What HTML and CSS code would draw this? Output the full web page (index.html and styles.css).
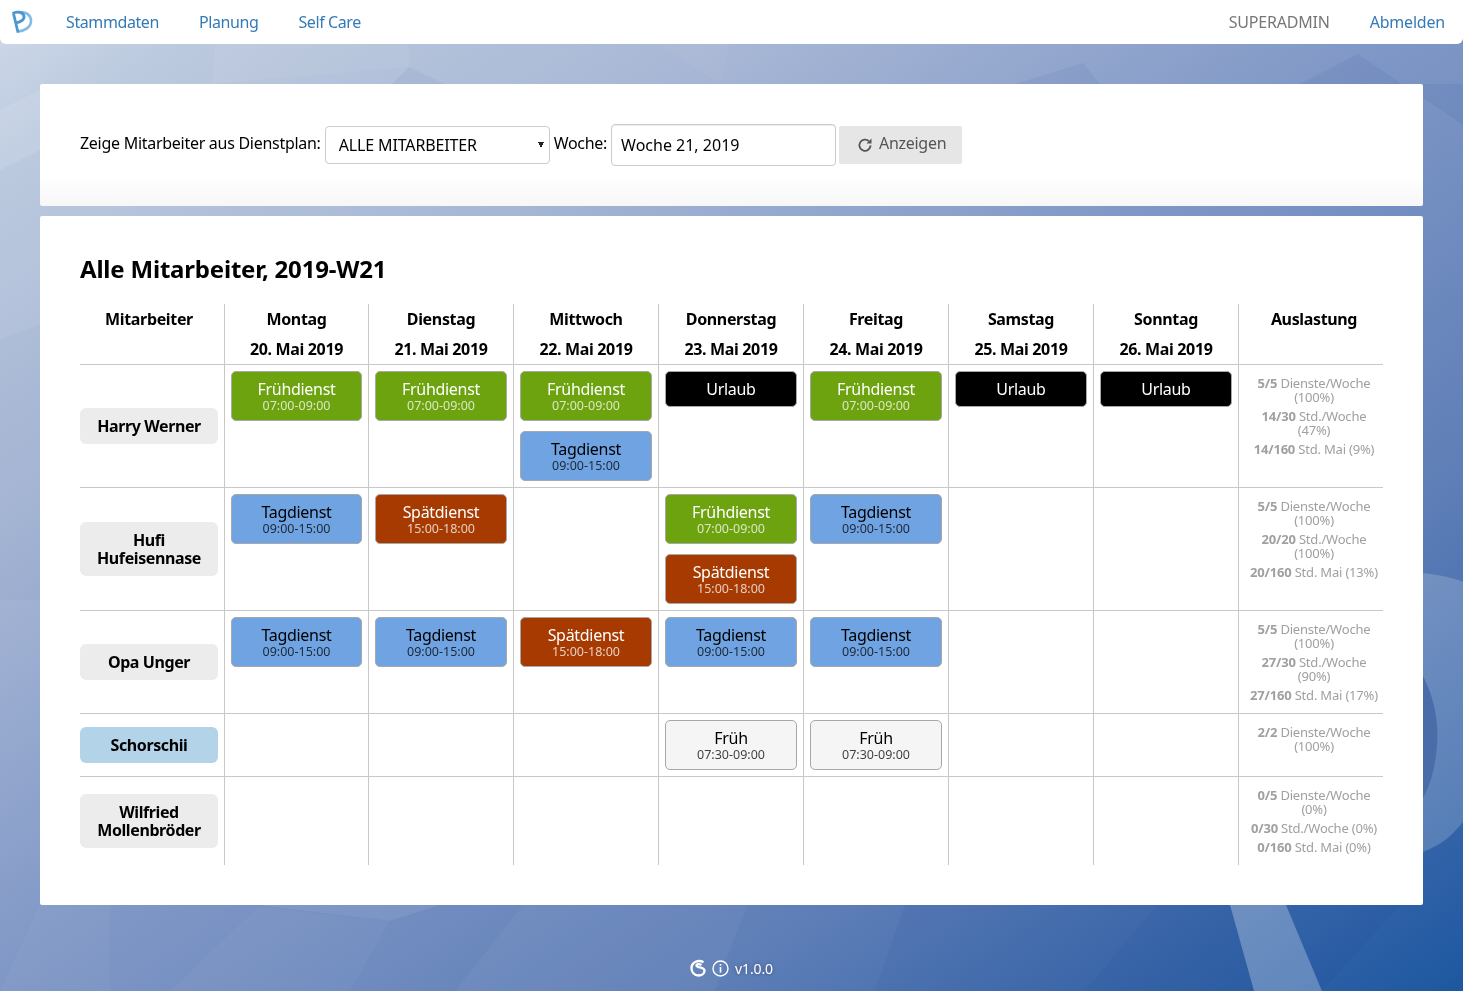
FILE: index.html
```html
<!DOCTYPE html>
<html lang="de">
<head>
    <meta charset="UTF-8">
    <meta name="viewport" content="width=device-width, initial-scale=1.0">
    <title>Dienstplan</title>
    <link rel="stylesheet" href="styles.css">
</head>
<body>

<!-- Page background -->
<svg class="backdrop" viewBox="0 0 1463 991" preserveAspectRatio="none" aria-hidden="true">
    <defs>
        <linearGradient id="bg" x1="0" y1="0" x2="1" y2="1">
            <stop offset="0" stop-color="#d0dbea"/>
            <stop offset="0.08" stop-color="#bccadf"/>
            <stop offset="0.27" stop-color="#a8b7d5"/>
            <stop offset="0.5" stop-color="#7f97c6"/>
            <stop offset="0.74" stop-color="#5e7eb7"/>
            <stop offset="0.95" stop-color="#2a5ea5"/>
            <stop offset="1" stop-color="#1c589f"/>
        </linearGradient>
    </defs>
    <rect width="1463" height="991" fill="url(#bg)"/>
    <g fill="#fff">
        <polygon points="215,44 409,44 409,67 212,84" opacity="0.05"/>
        <polygon points="660,44 730,44 720,84" opacity="0.04"/>
        <polygon points="0,170 40,150 40,90 0,110" opacity="0.1"/>
        <polygon points="258,907 390,921 350,991 170,991" opacity="0.03"/>
        <polygon points="258,905 440,905 390,921" opacity="0.07"/>
        <polygon points="523,905 747,905 715,991 455,991" opacity="0.04"/>
        <polygon points="1230,905 1286,905 1322,991 1254,991" opacity="0.26"/>
        <polygon points="40,905 110,905 110,991 0,991" opacity="0.03"/>
        <path d="M1423 573 C1440 575 1455 578 1463 582 L1463 822 C1450 838 1440 845 1423 852 Z" opacity="0.18"/>
    </g>
    <g fill="#103a80">
        <polygon points="409,67 445,84 392,84" opacity="0.05"/>
        <polygon points="1083,63 1100,84 1015,84" opacity="0.06"/>
        <polygon points="1358,54 1463,125 1463,84 1300,84" opacity="0.07"/>
        <polygon points="905,905 1157,905 1085,991 875,991" opacity="0.06"/>
        <polygon points="1157,905 1230,905 1254,991 1085,991" opacity="0.12"/>
        <polygon points="1286,905 1400,905 1322,991" opacity="0.06"/>
        <polygon points="0,340 40,325 40,600 0,600" opacity="0.03"/>
    </g>
    <path d="M1423 676 C1433 695 1439 720 1437 745 C1435 770 1430 785 1423 798 Z" fill="#4a6ca9"/>
</svg>

<nav class="topbar">
    <a class="logo" href="#" aria-label="Start">
        <svg width="22" height="24" viewBox="0 0 22 24">
            <path d="M9 2.500C15 1.500 20 5 20 11 20 17 14 21 6 21.800" fill="none" stroke="#84bbe2" stroke-width="2.600"/>
            <path d="M2.500 3.500 7 22.500M1.500 3.500C6 1.500 11.500 1.500 12.800 5.500 14 9.500 10 12 4.800 13" fill="none" stroke="#4b98cf" stroke-width="2.800"/>
        </svg>
    </a>
    <a class="nav-link" href="#">Stammdaten</a>
    <a class="nav-link" href="#">Planung</a>
    <a class="nav-link" href="#">Self Care</a>
    <span class="nav-user">SUPERADMIN</span>
    <a class="nav-link nav-logout" href="#">Abmelden</a>
</nav>

<main class="content">
    <form class="card filter-card">
        <label class="filter-label" for="plan">Zeige Mitarbeiter aus Dienstplan:</label>
        <select class="filter-select" id="plan">
            <option>ALLE MITARBEITER</option>
        </select>
        <label class="filter-label" for="week">Woche:</label>
        <input class="filter-input" id="week" type="text" value="Woche 21, 2019">
        <button class="filter-button" type="button">
            <svg width="16" height="16" viewBox="0 0 16 16">
                <path d="M13.6 8.400a5.600 5.600 0 1 1-1.700-4.200" fill="none" stroke="#555" stroke-width="1.800"/>
                <path d="M14.500 1.600v5h-5z" fill="#555"/>
            </svg>
            Anzeigen
        </button>
    </form>

    <section class="card plan-card">
        <h2 class="plan-title">Alle Mitarbeiter, 2019-W21</h2>
        <table class="plan">
            <colgroup>
                <col class="col-narrow"><col class="col-narrow">
                <col class="col-wide"><col class="col-wide"><col class="col-wide"><col class="col-wide">
                <col class="col-wide"><col class="col-wide"><col class="col-wide">
            </colgroup>
            <thead>
                <tr>
                    <th>Mitarbeiter</th>
                    <th>Montag<br>20. Mai 2019</th>
                    <th>Dienstag<br>21. Mai 2019</th>
                    <th>Mittwoch<br>22. Mai 2019</th>
                    <th>Donnerstag<br>23. Mai 2019</th>
                    <th>Freitag<br>24. Mai 2019</th>
                    <th>Samstag<br>25. Mai 2019</th>
                    <th>Sonntag<br>26. Mai 2019</th>
                    <th>Auslastung</th>
                </tr>
            </thead>
            <tbody>
                <tr>
                    <td class="name-cell"><div class="name">Harry Werner</div></td>
                    <td><div class="shift early">Frühdienst<small>07:00-09:00</small></div></td>
                    <td><div class="shift early">Frühdienst<small>07:00-09:00</small></div></td>
                    <td>
                        <div class="shift early">Frühdienst<small>07:00-09:00</small></div>
                        <div class="shift day">Tagdienst<small>09:00-15:00</small></div>
                    </td>
                    <td><div class="shift leave">Urlaub</div></td>
                    <td><div class="shift early">Frühdienst<small>07:00-09:00</small></div></td>
                    <td><div class="shift leave">Urlaub</div></td>
                    <td><div class="shift leave">Urlaub</div></td>
                    <td class="load">
                        <p><b>5/5</b> Dienste/Woche (100%)</p>
                        <p><b>14/30</b> Std./Woche (47%)</p>
                        <p><b>14/160</b> Std. Mai (9%)</p>
                    </td>
                </tr>
                <tr>
                    <td class="name-cell"><div class="name">Hufi Hufeisennase</div></td>
                    <td><div class="shift day">Tagdienst<small>09:00-15:00</small></div></td>
                    <td><div class="shift late">Spätdienst<small>15:00-18:00</small></div></td>
                    <td></td>
                    <td>
                        <div class="shift early">Frühdienst<small>07:00-09:00</small></div>
                        <div class="shift late">Spätdienst<small>15:00-18:00</small></div>
                    </td>
                    <td><div class="shift day">Tagdienst<small>09:00-15:00</small></div></td>
                    <td></td>
                    <td></td>
                    <td class="load">
                        <p><b>5/5</b> Dienste/Woche (100%)</p>
                        <p><b>20/20</b> Std./Woche (100%)</p>
                        <p><b>20/160</b> Std. Mai (13%)</p>
                    </td>
                </tr>
                <tr>
                    <td class="name-cell"><div class="name">Opa Unger</div></td>
                    <td><div class="shift day">Tagdienst<small>09:00-15:00</small></div></td>
                    <td><div class="shift day">Tagdienst<small>09:00-15:00</small></div></td>
                    <td><div class="shift late">Spätdienst<small>15:00-18:00</small></div></td>
                    <td><div class="shift day">Tagdienst<small>09:00-15:00</small></div></td>
                    <td><div class="shift day">Tagdienst<small>09:00-15:00</small></div></td>
                    <td></td>
                    <td></td>
                    <td class="load">
                        <p><b>5/5</b> Dienste/Woche (100%)</p>
                        <p><b>27/30</b> Std./Woche (90%)</p>
                        <p><b>27/160</b> Std. Mai (17%)</p>
                    </td>
                </tr>
                <tr>
                    <td class="name-cell"><div class="name name-active">Schorschii</div></td>
                    <td></td>
                    <td></td>
                    <td></td>
                    <td><div class="shift plain">Früh<small>07:30-09:00</small></div></td>
                    <td><div class="shift plain">Früh<small>07:30-09:00</small></div></td>
                    <td></td>
                    <td></td>
                    <td class="load">
                        <p><b>2/2</b> Dienste/Woche (100%)</p>
                    </td>
                </tr>
                <tr>
                    <td class="name-cell"><div class="name">Wilfried Mollenbröder</div></td>
                    <td></td>
                    <td></td>
                    <td></td>
                    <td></td>
                    <td></td>
                    <td></td>
                    <td></td>
                    <td class="load">
                        <p><b>0/5</b> Dienste/Woche (0%)</p>
                        <p><b>0/30</b> Std./Woche (0%)</p>
                        <p><b>0/160</b> Std. Mai (0%)</p>
                    </td>
                </tr>
            </tbody>
        </table>
    </section>
</main>

<footer class="footer">
    <svg width="16" height="18" viewBox="0 0 16 18">
        <path d="M13.500 3.200C9 .5 2 2.500 1.500 8.500 1.200 13 4.500 16.500 8.500 16.500c3.500 0 6-2 6-4.800 0-4-8-2.700-8-5.200 0-1.500 2.500-1.900 5-.5" fill="none" stroke="#fff" stroke-width="2.400"/>
    </svg>
    <svg width="17" height="17" viewBox="0 0 17 17">
        <circle cx="8.500" cy="8.500" r="7.500" fill="none" stroke="#fff" stroke-width="1.400"/>
        <rect x="7.700" y="7" width="1.600" height="5.500" fill="#fff"/>
        <rect x="7.700" y="4" width="1.600" height="1.700" fill="#fff"/>
    </svg>
    <span>v1.0.0</span>
</footer>

</body>
</html>
```

FILE: styles.css
```css
/* Global styles */

* {
  box-sizing: border-box;
  margin: 0;
  padding: 0;
}

body {
  font-family: "Noto Sans", "Open Sans", sans-serif;
  font-size: 16px;
  color: #000;
}

.backdrop {
  position: fixed;
  top: 0;
  left: 0;
  width: 100%;
  height: 100%;
  z-index: -1;
}

/* Top navigation */

.topbar {
  display: flex;
  align-items: center;
  height: 44px;
  padding: 0 18px 0 11px;
  background-color: #fff;
  border-radius: 0 0 6px 6px;
}

.logo {
  display: flex;
  width: 35px;
}

.nav-link {
  padding: 0 20px;
  color: #337ab7;
  text-decoration: none;
  letter-spacing: -0.4px;
}

.nav-user {
  margin-left: auto;
  padding: 0 20px;
  color: #777;
  letter-spacing: -0.2px;
}

.nav-logout {
  padding-right: 0;
  letter-spacing: -0.2px;
}

/* Cards */

.content {
  padding: 40px 40px 0;
}

.card {
  background-color: #fff;
  border-radius: 2px;
  padding: 40px;
}

/* Filter form */

.filter-card {
  display: flex;
  align-items: center;
  gap: 4px;
  margin-bottom: 10px;
  background-image: linear-gradient(to bottom, #fff 75%, #f7f7f7 100%);
}

.filter-label {
  margin-bottom: 4px;
  letter-spacing: -0.28px;
}

.filter-select {
  width: 225px;
  height: 38px;
  padding-left: 13px;
  font-family: inherit;
  font-size: 16px;
  letter-spacing: -0.13px;
  color: #000;
  appearance: none;
  background-color: #fff;
  background-image:
    linear-gradient(to top right, transparent 50%, #222 50%),
    linear-gradient(to top left, transparent 50%, #222 50%);
  background-repeat: no-repeat;
  background-size: 3px 6px;
  background-position: right 8px center, right 5px center;
  border: 1px solid #ccc;
  border-radius: 4px;
}

.filter-input {
  width: 225px;
  height: 42px;
  padding: 0 9px;
  font-family: inherit;
  font-size: 16px;
  color: #000;
  border: 1px solid #ccc;
  border-radius: 4px;
  box-shadow: inset 0 1px 1px rgba(0, 0, 0, 0.075);
}

.filter-button {
  display: flex;
  align-items: center;
  gap: 6px;
  height: 38px;
  margin-left: -1px;
  padding: 0 16px 4px 18px;
  font-family: inherit;
  font-size: 16px;
  letter-spacing: -0.3px;
  color: #555;
  background-color: #e6e6e6;
  border: none;
  border-radius: 2px;
}

.filter-button svg {
  margin-top: 4px;
}

/* Plan table */

.plan-title {
  margin-bottom: 22px;
  font-size: 24px;
  line-height: 26px;
  letter-spacing: -0.2px;
}

.plan {
  width: 1303px;
  table-layout: fixed;
  border-collapse: separate;
  border-spacing: 0;
}

.col-narrow {
  width: 144px;
}

.col-wide {
  width: 145px;
}

.plan th {
  font-size: 16px;
  line-height: 30px;
  letter-spacing: -0.35px;
  vertical-align: top;
  border-bottom: 1px solid #c8c8c8;
}

.plan th:first-child {
  padding-right: 6px;
}

.plan th:last-child {
  padding-left: 6px;
}

.plan td {
  padding: 6px;
  vertical-align: top;
  border-bottom: 1px solid #c8c8c8;
}

.plan th + th,
.plan td + td {
  border-left: 1px solid #c8c8c8;
}

.plan tbody tr:last-child td {
  border-bottom: none;
}

.plan .name-cell {
  padding: 0 6px 0 0;
  vertical-align: middle;
}

.name {
  padding: 9px 6px;
  font-weight: bold;
  line-height: 18px;
  letter-spacing: -0.4px;
  text-align: center;
  background-color: #ececec;
  border-radius: 6px;
}

.name-active {
  background-color: #b3d3e9;
}

/* Shift chips */

.shift {
  padding: 7px 2px;
  line-height: 20px;
  letter-spacing: -0.3px;
  text-align: center;
  border: 1px solid #a8a8a8;
  border-radius: 5px;
}

.shift + .shift {
  margin-top: 10px;
}

.shift small {
  display: block;
  font-size: 12.5px;
  line-height: 14px;
  letter-spacing: 0;
  opacity: 0.75;
}

.early {
  color: #fff;
  background-color: #6ca30f;
}

.day {
  color: #000;
  background-color: #6fa3e2;
}

.late {
  color: #fff;
  background-color: #a63a00;
}

.leave {
  color: #fff;
  background-color: #000;
}

.plain {
  color: #000;
  background-color: #f5f5f5;
}

/* Load column */

.plan .load {
  padding: 11px 0 11px 6px;
  font-size: 13px;
  line-height: 14px;
  letter-spacing: -0.2px;
  text-align: center;
  color: #a0a0a0;
}

.load p + p {
  margin-top: 5px;
}

/* Footer */

.footer {
  display: flex;
  justify-content: center;
  align-items: center;
  gap: 6px;
  height: 28px;
  margin-top: 49px;
  font-size: 14px;
  letter-spacing: -0.1px;
  color: #fff;
  text-shadow: 0 0 4px rgba(0, 0, 0, 0.4);
}
```
